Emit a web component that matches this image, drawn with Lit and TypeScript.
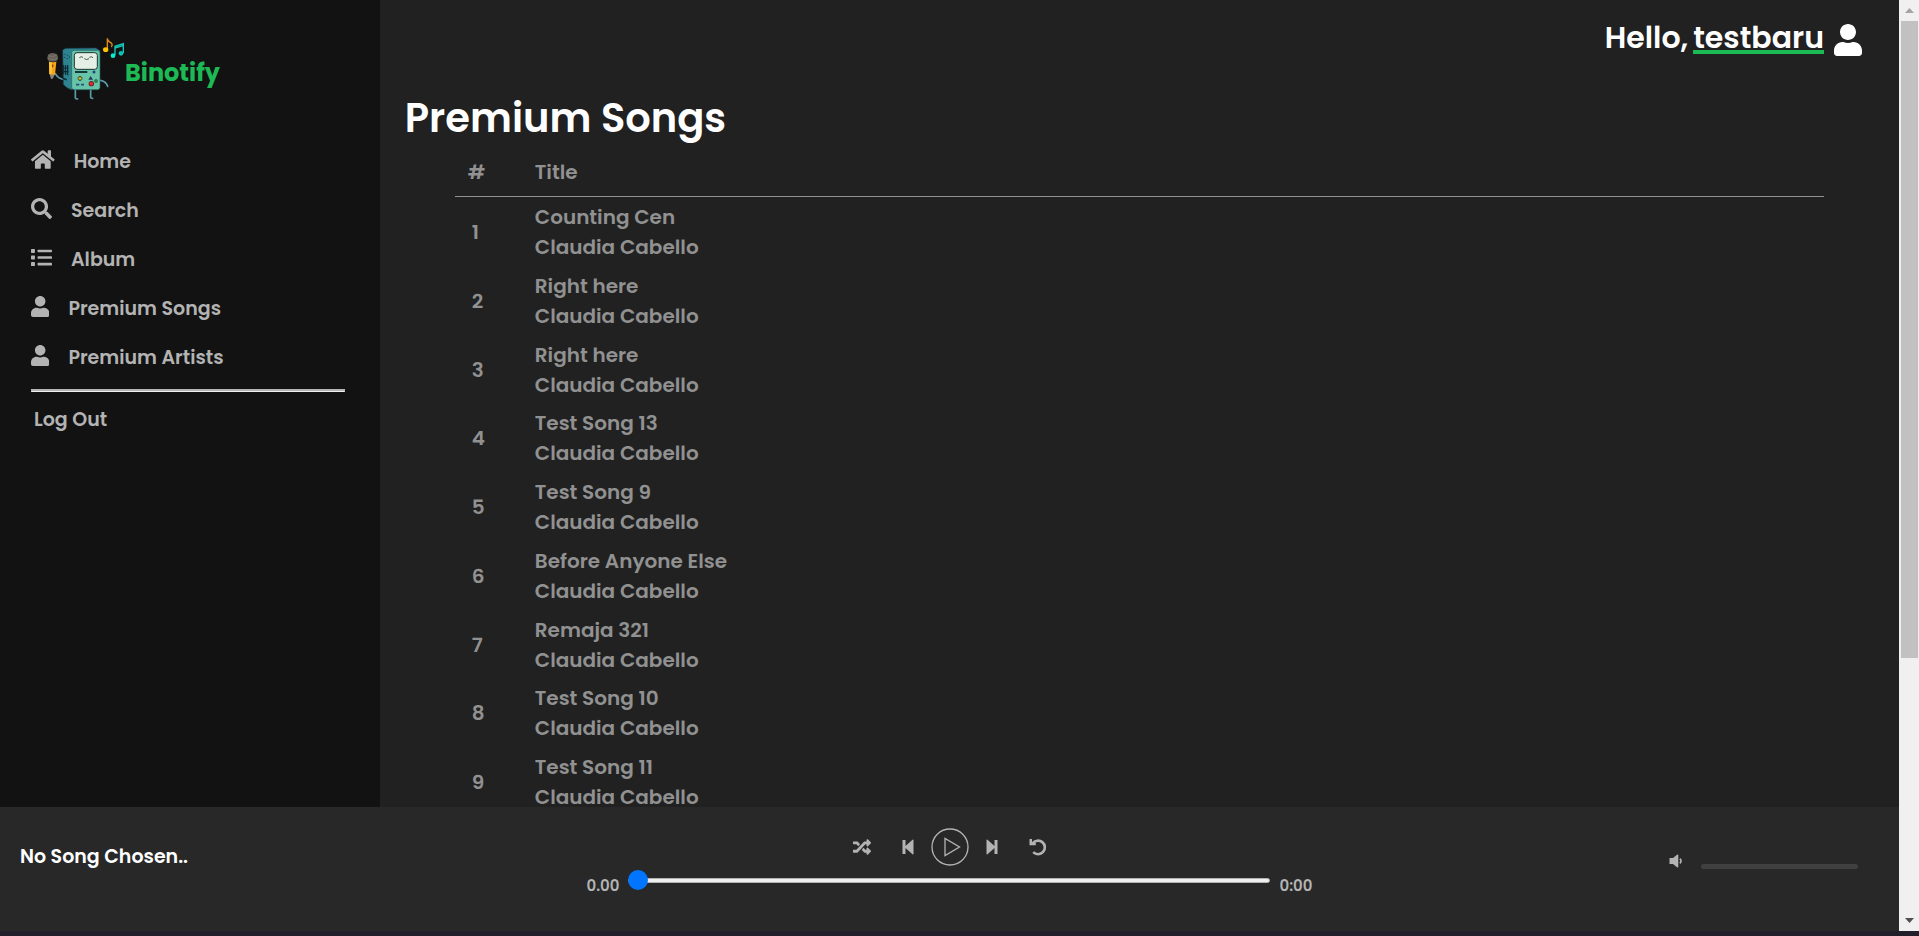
import { LitElement, html, svg, css } from "lit";
import { customElement, property, state } from "lit/decorators.js";

const USER_PATH =
  "M224 256c70.7 0 128-57.3 128-128S294.7 0 224 0 96 57.3 96 128s57.3 128 128 128zm89.6 32h-16.7c-22.2 10.2-46.9 16-72.9 16s-50.6-5.8-72.9-16h-16.7C60.2 288 0 348.2 0 422.4V464c0 26.5 21.5 48 48 48h352c26.5 0 48-21.5 48-48v-41.6c0-74.2-60.2-134.4-134.4-134.4z";

const ICONS: Record<string, { box: string; shape: unknown }> = {
  home: {
    box: "0 0 576 512",
    shape: svg`<path d="M280.37 148.26L96 300.11V464a16 16 0 0 0 16 16l112.06-.29a16 16 0 0 0 15.92-16V368a16 16 0 0 1 16-16h64a16 16 0 0 1 16 16v95.64a16 16 0 0 0 16 16.05L464 480a16 16 0 0 0 16-16V300L295.67 148.26a12.19 12.19 0 0 0-15.3 0zM571.6 251.47L488 182.56V44.05a12 12 0 0 0-12-12h-56a12 12 0 0 0-12 12v72.61L318.47 43a48 48 0 0 0-61 0L4.34 251.47a12 12 0 0 0-1.6 16.9l25.5 31A12 12 0 0 0 45.15 301l235.22-193.74a12.19 12.19 0 0 1 15.3 0L530.9 301a12 12 0 0 0 16.9-1.6l25.5-31a12 12 0 0 0-1.7-16.93z"/>`,
  },
  search: {
    box: "0 0 512 512",
    shape: svg`<path d="M505 442.7L405.3 343c-4.5-4.5-10.6-7-17-7H372c27.6-35.3 44-79.7 44-128C416 93.1 322.9 0 208 0S0 93.1 0 208s93.1 208 208 208c48.3 0 92.7-16.4 128-44v16.3c0 6.4 2.5 12.5 7 17l99.7 99.7c9.4 9.4 24.6 9.4 33.9 0l28.3-28.3c9.4-9.4 9.4-24.6.1-34zM208 336c-70.7 0-128-57.2-128-128 0-70.7 57.2-128 128-128 70.7 0 128 57.2 128 128 0 70.7-57.2 128-128 128z"/>`,
  },
  list: {
    box: "0 0 512 512",
    shape: svg`<rect y="48" width="96" height="96" rx="16"/><rect y="208" width="96" height="96" rx="16"/><rect y="368" width="96" height="96" rx="16"/><rect x="160" y="64" width="352" height="64" rx="16"/><rect x="160" y="224" width="352" height="64" rx="16"/><rect x="160" y="384" width="352" height="64" rx="16"/>`,
  },
  user: { box: "0 0 448 512", shape: svg`<path d=${USER_PATH} />` },
  shuffle: {
    box: "0 0 512 512",
    shape: svg`<path d="M504.971 359.029c9.373 9.373 9.373 24.569 0 33.941l-80 79.984c-15.01 15.01-40.971 4.49-40.971-16.971V416h-58.785a12.004 12.004 0 0 1-8.773-3.812l-70.556-75.596 53.333-57.143L352 336h32v-39.981c0-21.438 25.943-31.998 40.971-16.971l80 79.981zM12 176h84l52.781 56.551 53.333-57.143-70.556-75.596A11.999 11.999 0 0 0 122.785 96H12c-6.627 0-12 5.373-12 12v56c0 6.627 5.373 12 12 12zm372 0v39.984c0 21.46 25.961 31.98 40.971 16.971l80-79.984c9.373-9.373 9.373-24.569 0-33.941l-80-79.981C409.943 24.021 384 34.582 384 56.019V96h-58.785a12.004 12.004 0 0 0-8.773 3.812L96 336H12c-6.627 0-12 5.373-12 12v56c0 6.627 5.373 12 12 12h110.785c3.326 0 6.503-1.381 8.773-3.812L352 176h32z"/>`,
  },
  previous: {
    box: "0 0 12 18",
    shape: svg`<path d="M0.5 2h3v6L10.5 1.8q1-.6 1 .5v13.400q0 1.100-1 .5L3.500 10v6h-3z"/>`,
  },
  next: {
    box: "0 0 12 18",
    shape: svg`<path d="M11.500 2h-3v6L1.500 1.800q-1-.6-1 .5v13.400q0 1.100 1 .5L8.500 10v6h3z"/>`,
  },
  play: {
    box: "0 0 38 38",
    shape: svg`<g fill="none" stroke="currentColor" stroke-width="1.300"><circle cx="19" cy="19" r="18"/><path d="M14 10.500v17L28.500 19z"/></g>`,
  },
  repeat: {
    box: "0 0 18 18",
    shape: svg`<path d="M3.500 5.500A6.800 6.800 0 1 1 4.200 14.200" fill="none" stroke="currentColor" stroke-width="2.600"/><path d="M.5 1v6.200h6.300V5L3 4.600V1z"/>`,
  },
  volume: {
    box: "0 0 14 14",
    shape: svg`<path d="M.5 4H4L8 .8q1.300-.8 1.300.4v11.600q0 1.200-1.300.4L4 10H.5z"/><path d="M10.800 4.800a2.600 2.600 0 0 1 0 4.400" fill="none" stroke="currentColor" stroke-width="1.700"/>`,
  },
};

@customElement("ui-icon")
class UiIcon extends LitElement {
  @property() name = "";
  static styles = css`
    :host { display: inline-flex; flex: none; }
    .glyph { display: block; height: var(--icon-size, 21px); width: auto; fill: currentColor; }
  `;
  render() {
    const icon = ICONS[this.name];
    return html`<svg class="glyph" viewBox=${icon.box} aria-hidden="true">${icon.shape}</svg>`;
  }
}

@customElement("brand-logo")
class BrandLogo extends LitElement {
  static styles = css`
    :host { display: block; flex: none; }
    .robot { display: block; width: 80px; height: 67px; }
  `;
  render() {
    return html`<svg class="robot" viewBox="45 30 240 201" aria-hidden="true">
      <g fill="none" stroke="#5c9bab" stroke-width="5" stroke-linecap="round">
        <path d="M76 146q10 18 30 17" />
        <path d="M210 166q18 2 23 18" />
        <path d="M136 194v25q1 3 7 3" />
        <path d="M182 194v24q1 2 6 2" />
      </g>
      <path d="M98 76q2-5 12-6l88-1 12 8-84 118q-16-4-26-17z" fill="#2e8390" stroke="#173d45" stroke-width="2" />
      <rect x="125" y="76" width="85" height="118" rx="7" fill="#68c4a8" stroke="#245f60" stroke-width="2" />
      <rect x="133" y="83" width="69" height="50" rx="8" fill="#e6efe5" stroke="#17352f" stroke-width="3" />
      <path d="M148 98q5-5 11-1M178 97q6-4 11 1M163 101q7 5 14 0" fill="none" stroke="#283d34" stroke-width="2.500" />
      <g fill="#12424b">
        <circle cx="105" cy="88" r="2" /><circle cx="113" cy="91" r="2" />
        <circle cx="104" cy="97" r="2" /><circle cx="112" cy="101" r="2" />
        <circle cx="118" cy="96" r="2" />
      </g>
      <path d="M101 120v28m6-28v30m6-30v31m-13-22h16m-16 11h16" fill="none" stroke="#0c2c34" stroke-width="3.500" />
      <path d="M98 160l12 4" stroke="#0c2c34" stroke-width="5" />
      <rect x="135" y="138" width="37" height="6" fill="#17393c" />
      <circle cx="192" cy="141" r="4.500" fill="#26447f" />
      <path d="M143 160h14M150 153v14" stroke="#174035" stroke-width="7" />
      <path d="M145 160h10M150 155v10" stroke="#d9b525" stroke-width="4" />
      <path d="M182 153l7 11h-14z" fill="#20394e" />
      <circle cx="198" cy="168" r="5" fill="#2d8251" stroke="#1d4f3a" />
      <circle cx="184" cy="176" r="8" fill="#3b2627" />
      <circle cx="184" cy="176" r="6" fill="#e3272c" />
      <path d="M138 179h10m5 0h9" stroke="#26517a" stroke-width="5" />
      <path d="M57 108l22 2-4 39-10 3-7-5z" fill="#f9a31a" />
      <path d="M57 108l9 1-1 42-7-4z" fill="#ffc42e" />
      <path d="M59 148l15 1-6 12-5 1z" fill="#8a847d" />
      <rect x="66" y="118" width="4" height="9" rx="2" fill="#754b1a" />
      <ellipse cx="68" cy="98" rx="16" ry="14" fill="#66615a" />
      <path d="M54 92q12 7 27-2M53 101q14 6 30 0" fill="none" stroke="#928a77" stroke-width="1.500" />
      <path d="M55 107q12 6 26 1" fill="none" stroke="#393832" stroke-width="3.500" />
      <path d="M232 73V40q1 9 9 12 9 5 3 14" fill="none" stroke="#e58b17" stroke-width="4" />
      <ellipse cx="227" cy="74" rx="8" ry="7" fill="#ffc400" />
      <path d="M255 91V64l25-8v28M255 69l25-8" fill="none" stroke="#12cdbd" stroke-width="4" />
      <ellipse cx="249" cy="92" rx="7" ry="7" fill="#08ecd0" />
      <ellipse cx="273" cy="85" rx="7" ry="7" fill="#08c4b2" />
    </svg>`;
  }
}

const NAV = [
  { icon: "home", label: "Home" },
  { icon: "search", label: "Search" },
  { icon: "list", label: "Album" },
  { icon: "user", label: "Premium Songs" },
  { icon: "user", label: "Premium Artists" },
];

const SONGS = [
  "Counting Cen",
  "Right here",
  "Right here",
  "Test Song 13",
  "Test Song 9",
  "Before Anyone Else",
  "Remaja 321",
  "Test Song 10",
  "Test Song 11",
].map((title) => ({ title, artist: "Claudia Cabello" }));

@customElement("side-nav")
class SideNav extends LitElement {
  static styles = css`
    :host { display: block; background: #121212; padding: 35px 35px 0 31px; color: #b3b3b3; }
    .brand { display: flex; align-items: center; padding-left: 14px; color: #1db954; text-decoration: none; font-size: 24px; font-weight: 700; }
    .menu { list-style: none; margin: 35px 0 0; padding: 0; }
    .link { display: flex; align-items: center; gap: 19px; height: 49px; color: inherit; text-decoration: none; }
    .link ui-icon { padding-bottom: 4px; }
    .rule { height: 1px; border: 1px solid #b3b3b3; border-bottom-color: #efefef; margin: 7px 0 13px; background: #b3b3b3; }
    .logout { padding: 0 3px; border: 0; background: none; color: inherit; font: inherit; line-height: 30px; }
    .name { line-height: 30px; }
    .brand-name { padding-top: 8px; }
  `;
  render() {
    return html`
      <a class="brand" href="#home"><brand-logo></brand-logo><span class="brand-name">Binotify</span></a>
      <nav>
        <ul class="menu">
          ${NAV.map((n) => html`<li><a class="link" href="#"><ui-icon name=${n.icon}></ui-icon><span class="name">${n.label}</span></a></li>`)}
        </ul>
      </nav>
      <hr class="rule" />
      <button class="logout" type="button">Log Out</button>
    `;
  }
}

@customElement("song-list")
class SongList extends LitElement {
  static styles = css`
    :host { display: block; background: #212121; color: #fff; overflow: hidden; min-height: 0; }
    .top { display: flex; justify-content: flex-end; align-items: center; gap: 10px; height: 80px; padding-right: 37px; box-sizing: border-box; }
    .greeting { display: flex; align-items: baseline; gap: 5px; font-size: 30px; line-height: 24px; }
    .user { color: inherit; text-decoration: none; border-bottom: 4px solid #1db954; }
    .avatar { --icon-size: 32px; }
    .heading { margin: 8px 25px 0; font-size: 40px; line-height: 60px; font-weight: 600; }
    .frame { padding: 0 75px; }
    .songs { width: 100%; border-collapse: collapse; color: #919191; font-size: 20px; line-height: 30px; }
    .songs th { height: 48px; padding: 0; text-align: left; font-weight: 600; border-bottom: 1px solid #919191; }
    .songs td { height: 69px; padding: 0; }
    .songs tbody tr:nth-child(4n) td { height: 68px; }
    .songs th.index { width: 67px; padding-left: 13px; }
    .songs td.index { padding-left: 17px; }
  `;
  render() {
    return html`
      <header class="top">
        <div class="greeting"><span>Hello,</span><a class="user" href="#profile">testbaru</a></div>
        <ui-icon class="avatar" name="user"></ui-icon>
      </header>
      <h1 class="heading">Premium Songs</h1>
      <div class="frame">
        <table class="songs">
          <thead><tr><th class="index" scope="col">#</th><th scope="col">Title</th></tr></thead>
          <tbody>
            ${SONGS.map((s, i) => html`<tr><td class="index">${i + 1}</td><td><div>${s.title}</div><div>${s.artist}</div></td></tr>`)}
          </tbody>
        </table>
      </div>
    `;
  }
}

@customElement("player-bar")
class PlayerBar extends LitElement {
  @state() position = 0;
  static styles = css`
    :host { display: grid; grid-template-columns: 1fr 726px 1fr; background: #282828; color: #b3b3b3; height: 124px; }
    .song { padding: 35px 20px 0; color: #fff; line-height: 30px; }
    .center { padding-top: 21px; }
    .controls { display: flex; justify-content: center; align-items: center; height: 38px; }
    .control { display: flex; justify-content: center; align-items: center; border: 0; padding: 0; background: none; color: inherit; width: 50px; height: 38px; --icon-size: 18px; }
    .control.skip { width: 42px; }
    .control.play { --icon-size: 38px; width: 42px; }
    .timeline { display: flex; align-items: flex-start; justify-content: space-between; gap: 9px; font-size: 15px; line-height: 22px; padding-top: 4px; }
    .time { padding-top: 5px; }
    .seek { appearance: none; flex: 1; height: 20px; margin: 0; background: none; }
    .seek::-webkit-slider-runnable-track { height: 5px; border: 1px solid #b3b3b3; border-radius: 3px; background: #efefef; box-sizing: border-box; }
    .seek::-webkit-slider-thumb { appearance: none; width: 20px; height: 20px; border-radius: 50%; background: #0075ff; margin: -9px 0 0 -1px; }
    .volume { display: flex; justify-content: flex-end; align-items: flex-start; padding: 47px 41px 0 0; gap: 18px; }
    .mute { display: flex; border: 0; padding: 0; background: none; color: inherit; --icon-size: 14px; }
    .level { appearance: none; width: 157px; height: 5px; margin: 10px 0 0; border-radius: 3px; background: #404040; }
    .level::-webkit-slider-thumb { appearance: none; width: 0; height: 5px; }
  `;
  render() {
    return html`
      <div class="song">No Song Chosen..</div>
      <div class="center">
        <div class="controls">
          <button class="control" aria-label="Shuffle"><ui-icon name="shuffle"></ui-icon></button>
          <button class="control skip" aria-label="Previous"><ui-icon name="previous"></ui-icon></button>
          <button class="control play" aria-label="Play"><ui-icon name="play"></ui-icon></button>
          <button class="control skip" aria-label="Next"><ui-icon name="next"></ui-icon></button>
          <button class="control" aria-label="Repeat"><ui-icon name="repeat"></ui-icon></button>
        </div>
        <div class="timeline">
          <span class="time">0.00</span>
          <input class="seek" type="range" min="0" max="100" .value=${String(this.position)} aria-label="Song position" />
          <span class="time">0:00</span>
        </div>
      </div>
      <div class="volume">
        <button class="mute" aria-label="Mute"><ui-icon name="volume"></ui-icon></button>
        <input class="level" type="range" min="0" max="100" value="0" aria-label="Volume" />
      </div>
    `;
  }
}

@customElement("app-root")
class AppRoot extends LitElement {
  static styles = css`
    :host { display: grid; grid-template-columns: 1fr 20px; height: 100vh; box-sizing: border-box; border-bottom: 5px solid #211f2a; background: #212121; font-family: "Poppins", "Inter", sans-serif; font-size: 19px; font-weight: 600; overflow: hidden; }
    .shell { display: grid; grid-template-rows: minmax(0, 1fr) auto; min-width: 0; min-height: 0; }
    .body { display: grid; grid-template-columns: 20% 1fr; min-height: 0; }
    .scroll { display: grid; grid-template-rows: 21px 637fr 252fr 21px; background: #f0f0f0; min-height: 0; }
    .thumb { grid-row: 2; margin: 0 1px 0 2px; background: #c1c1c1; }
    .arrow { align-self: center; justify-self: center; width: 9px; height: 5px; fill: #a3a3a3; }
    .arrow.down { grid-row: 4; fill: #505050; }
  `;
  render() {
    return html`
      <div class="shell">
        <div class="body"><side-nav></side-nav><song-list></song-list></div>
        <player-bar></player-bar>
      </div>
      <div class="scroll" aria-hidden="true">
        <svg class="arrow" viewBox="0 0 9 5"><path d="M0 5L4.500 0 9 5z" /></svg>
        <div class="thumb"></div>
        <svg class="arrow down" viewBox="0 0 9 5"><path d="M0 0h9L4.500 5z" /></svg>
      </div>
    `;
  }
}
